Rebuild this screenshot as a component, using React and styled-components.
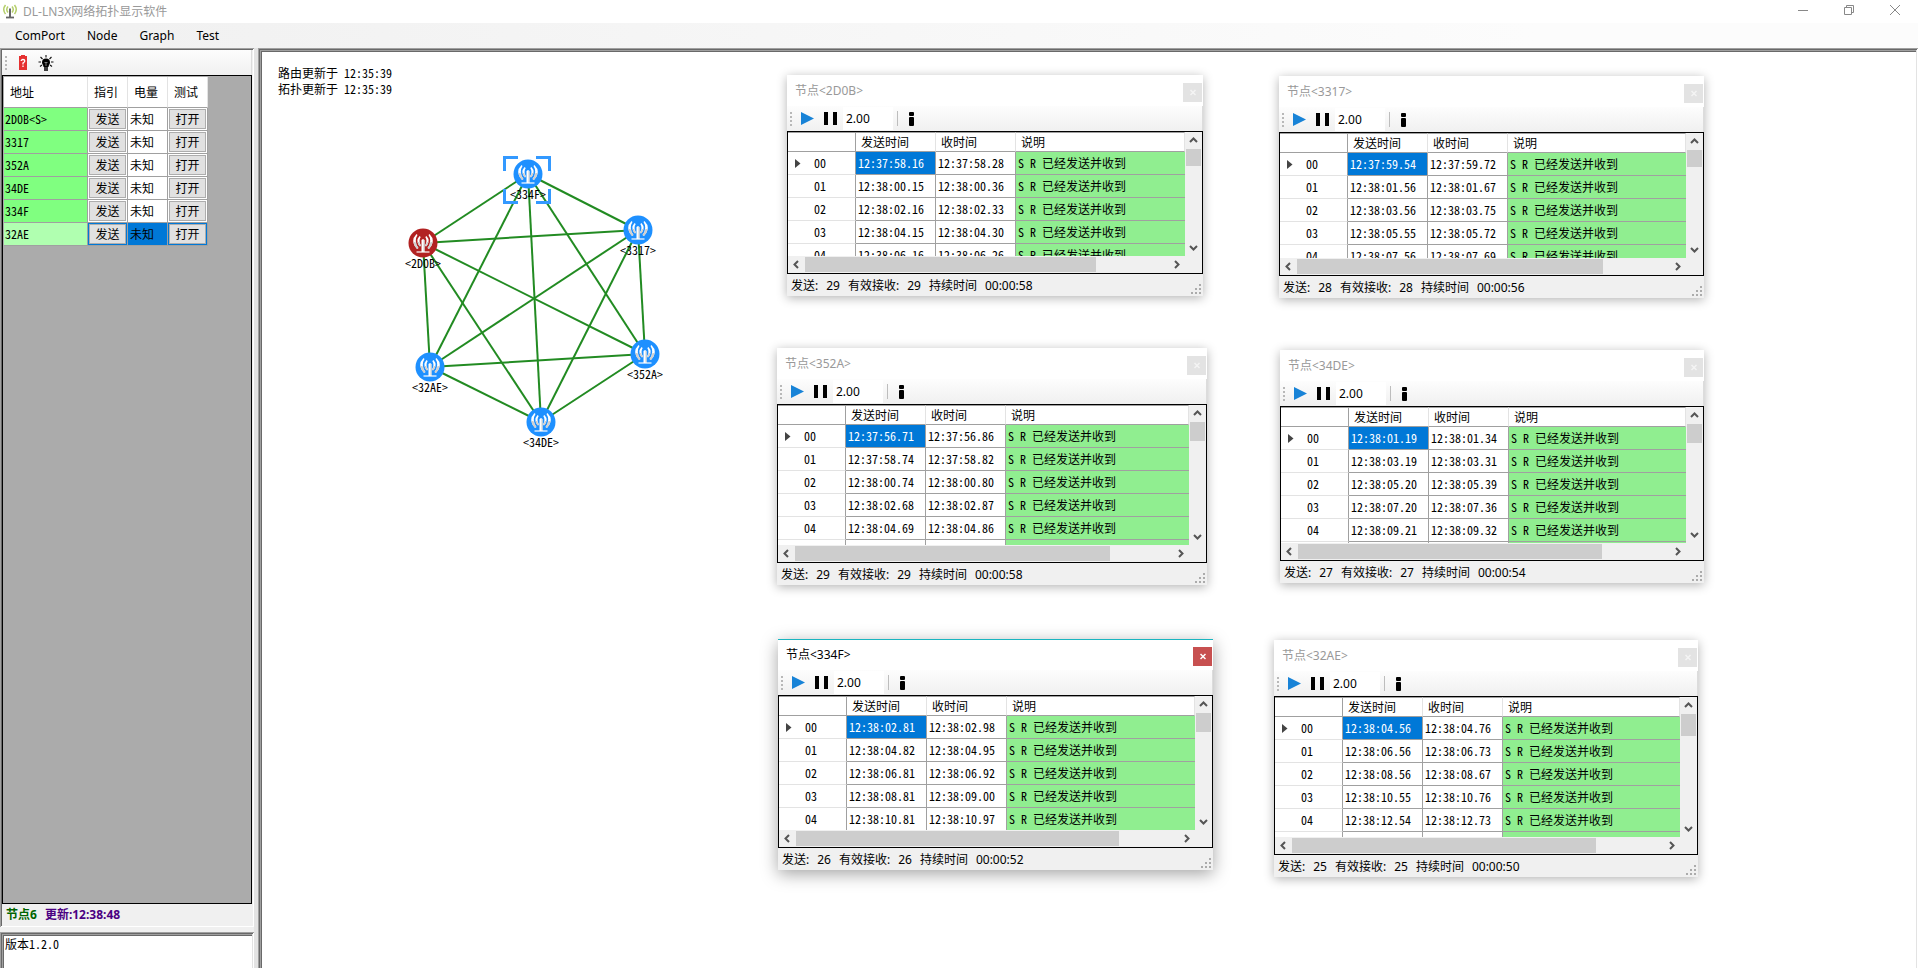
import React from "react";
import styled, { createGlobalStyle, css } from "styled-components";

const UI = `"Noto Sans", "Noto Sans CJK SC", sans-serif`;
const GRID = `"Noto Sans CJK SC", "Noto Sans", sans-serif`;

const Global = createGlobalStyle`
  *, *::before, *::after { box-sizing: border-box; }
  body { margin: 0; background: #f0f0f0; color: #000; font: 12px/16px ${UI}; }
  button, input, textarea { font: inherit; color: inherit; margin: 0; padding: 0; border: 0; border-radius: 0; background: none; }
`;

/* half-width Latin glyphs, two to a Chinese character */
const gridFont = css`
  font-family: ${GRID};
  font-feature-settings: "hwid";
`;

const sunken = css`
  box-shadow: inset 1px 1px #a0a0a0, inset -1px 0 #fff, inset 2px 2px #696969,
    inset -2px 0 #e3e3e3, inset 3px 3px #a0a0a0, inset 4px 4px #696969;
`;

const Page = styled.div`
  display: flex;
  flex-direction: column;
  height: 100vh;
  overflow: hidden;
`;

const TitleBar = styled.header`
  display: flex;
  align-items: center;
  gap: 6px;
  height: 23px;
  padding-left: 3px;
  background: #fff;
  color: #999;
  flex: none;
`;

const AppTitle = styled.h1`
  margin: 0;
  flex: 1;
  font-size: 12px;
  font-weight: 400;
`;

const CaptionButtons = styled.div`
  display: flex;
  align-self: flex-start;
`;

const CaptionButton = styled.button`
  display: flex;
  align-items: center;
  justify-content: center;
  width: 46px;
  height: 20px;
`;

const MenuBar = styled.nav`
  display: flex;
  align-items: center;
  gap: 22px;
  height: 25px;
  padding-left: 15px;
  background: linear-gradient(90deg, #f0f0f0, #fcfcfc 80%);
  flex: none;
`;

const Main = styled.div`
  display: flex;
  flex: 1;
  min-height: 0;
`;

const Side = styled.aside`
  display: flex;
  flex-direction: column;
  gap: 5px;
  width: 254px;
  flex: none;
`;

const SidePanel = styled.section`
  display: flex;
  flex-direction: column;
  flex: 1;
  min-height: 0;
  padding: 2px 2px 1px 2px;
  box-shadow: inset 1px 1px #a0a0a0, inset -1px -1px #fff, inset 2px 2px #696969;
`;

const Splitter = styled.div`
  width: 4px;
  background: #e3e3e3;
  flex: none;
`;

const ToolStrip = styled.div`
  display: flex;
  align-items: center;
  height: 25px;
  padding-left: 3px;
  background: linear-gradient(#fdfdfd, #f0f0f0);
  border-right: 1px solid #dcdcdc;
  flex: none;
`;

const ToolButton = styled.button`
  display: flex;
  align-items: center;
  justify-content: center;
  width: 23px;
  height: 21px;
`;

const GripDots = styled.span`
  width: 2px;
  height: 14px;
  margin-right: 4px;
  background: repeating-linear-gradient(#b8b8b8 0 2px, transparent 2px 4px);
`;

const NodeList = styled.div`
  flex: 1;
  padding: 1px;
  background: #ababab;
  border: 1px solid #000;
  overflow: hidden;
`;

const NodeTable = styled.table`
  ${gridFont}
  table-layout: fixed;
  border-collapse: separate;
  border-spacing: 0;
  width: 204px;
  line-height: 18px;

  th {
    height: 31px;
    padding: 0 0 0 6px;
    background: #fff;
    text-align: left;
    font-weight: 400;
    border-right: 1px solid #e3e3e3;
    border-bottom: 1px solid #a0a0a0;
  }
  td {
    height: 23px;
    padding: 0;
    background: #fff;
    border-right: 1px solid #a0a0a0;
    border-bottom: 1px solid #a0a0a0;
  }
`;

const AddressCell = styled.td`
  && {
    padding: 0 0 1px 1px;
    background: ${(p) => (p.$current ? "#b0ffb0" : "#80ff80")};
  }
`;

const ActionCell = styled.td`
  && {
    padding: 1px;
    box-shadow: ${(p) => (p.$current ? "inset 0 0 0 1px #0078d7" : "none")};
  }
`;

const PowerCell = styled.td`
  && {
    padding: 0 0 1px 2px;
    background: ${(p) => (p.$current ? "#0078d7" : "#fff")};
  }
`;

const CellButton = styled.button`
  display: block;
  width: 100%;
  height: 20px;
  line-height: 16px;
  background: #e1e1e1;
  border: 1px solid #adadad;
`;

const SideStatus = styled.footer`
  display: flex;
  align-items: center;
  gap: 8px;
  height: 22px;
  padding-left: 4px;
  font-weight: 700;
  flex: none;
`;

const Count = styled.span`
  color: #006400;
`;

const Updated = styled.span`
  color: #4b0082;
`;

const LogBox = styled.textarea`
  ${gridFont}
  ${sunken}
  height: 36px;
  padding: 4px 5px;
  line-height: 16px;
  background: #fff;
  resize: none;
  overflow: hidden;
  outline: none;
  flex: none;
`;

const Workspace = styled.main`
  ${sunken}
  position: relative;
  flex: 1;
  padding: 17px 20px;
  background: #fff;
  overflow: hidden;
`;

const UpdateNote = styled.p`
  ${gridFont}
  margin: 0;
`;

const Graph = styled.svg`
  position: absolute;
  left: 142px;
  top: 92px;
  width: 280px;
  height: 320px;
`;

const NodeLabel = styled.text`
  ${gridFont}
  font-size: 12px;
  text-anchor: middle;
`;

const Win = styled.section`
  position: absolute;
  left: ${(p) => p.$x}px;
  top: ${(p) => p.$y}px;
  width: ${(p) => p.$w}px;
  height: ${(p) => p.$h}px;
  display: flex;
  flex-direction: column;
  background: #f0f0f0;
  box-shadow: ${(p) =>
    p.$active ? "0 4px 16px rgba(0,0,0,.36)" : "0 2px 10px rgba(0,0,0,.3)"};
`;

const WinTitle = styled.header`
  display: flex;
  align-items: center;
  justify-content: space-between;
  height: 31px;
  padding: 0 1px 0 8px;
  background: #fff;
  color: ${(p) => (p.$active ? "#000" : "#999")};
  box-shadow: ${(p) => (p.$active ? "inset 0 1px #1ab5c0" : "none")};
  flex: none;
`;

const WinName = styled.h2`
  margin: 0;
  font-size: 12px;
  font-weight: 400;
`;

const CloseButton = styled.button`
  display: flex;
  align-items: center;
  justify-content: center;
  width: 19px;
  height: 19px;
  margin-top: 4px;
  background: ${(p) => (p.$active ? "#c75050" : "#e3e3e3")};
  color: ${(p) => (p.$active ? "#fff" : "#f4f4f4")};
`;

const SpeedInput = styled.input`
  width: 50px;
  height: 23px;
  padding-left: 3px;
  background: #fff;
  outline: none;
  margin-left: 1px;
`;

const Separator = styled.span`
  width: 1px;
  height: 15px;
  margin: 0 2px 0 4px;
  background: #bdbdbd;
`;

const DataGrid = styled.div`
  display: grid;
  grid-template: minmax(0, 1fr) 17px / minmax(0, 1fr) 17px;
  flex: 1;
  min-height: 0;
  border: 1px solid #000;
`;

const Viewport = styled.div`
  background: #fff;
  overflow: hidden;
`;

const LogTable = styled.table`
  ${gridFont}
  table-layout: fixed;
  border-collapse: separate;
  border-spacing: 0;
  width: 100%;
  line-height: 18px;

  thead td,
  thead th {
    height: 20px;
    padding: 0 0 0 5px;
    text-align: left;
    font-weight: 400;
    border-top: 1px solid #a0a0a0;
    border-right: 1px solid #e3e3e3;
    border-bottom: 1px solid #a0a0a0;
  }
  thead td {
    border-right-color: #a0a0a0;
  }
  tbody th {
    height: 23px;
    padding: 0 0 0 7px;
    font-weight: 400;
    border-right: 1px solid #a0a0a0;
    border-bottom: 1px solid #e3e3e3;
  }
`;

const RowHead = styled.div`
  display: flex;
  align-items: center;
  gap: 13px;
`;

const Cell = styled.td`
  height: 23px;
  padding: 0 0 1px 2px;
  white-space: nowrap;
  border-right: ${(p) => (p.$note ? 0 : "1px solid #a0a0a0")};
  border-bottom: 1px solid #a0a0a0;
  background: ${(p) => (p.$selected ? "#0078d7" : p.$note ? "#90ee90" : "#fff")};
  color: ${(p) => (p.$selected ? "#fff" : "#000")};
`;

const ScrollTrack = styled.div`
  display: flex;
  flex-direction: ${(p) => (p.$vertical ? "column" : "row")};
  background: #f0f0f0;
`;

const ScrollArrow = styled.button`
  display: flex;
  align-items: center;
  justify-content: center;
  width: 17px;
  height: 17px;
  flex: none;
`;

const ScrollThumb = styled.div`
  background: #cdcdcd;
  ${(p) =>
    p.$vertical
      ? `height: ${p.$size}px; margin: 0 1px auto 1px;`
      : `width: ${p.$size}px; margin: 1px auto 1px 0;`}
`;

const StatusBar = styled.footer`
  display: flex;
  align-items: center;
  gap: 8px;
  height: 22px;
  padding: 1px 2px 0 4px;
  flex: none;
`;

const SizeGrip = styled.svg`
  margin: 6px 0 0 auto;
`;

function Arrow({ dir, label }) {
  const turn = { up: 0, right: 90, down: 180, left: 270 }[dir];
  return (
    <ScrollArrow aria-label={label}>
      <svg width="9" height="9" viewBox="0 0 9 9">
        <path
          d="M1 6 L4.5 2.5 L8 6"
          fill="none"
          stroke="#555"
          strokeWidth="2"
          transform={`rotate(${turn} 4.5 4.5)`}
        />
      </svg>
    </ScrollArrow>
  );
}

function AppIcon() {
  return (
    <svg width="14" height="15" viewBox="0 0 14 15" fill="none">
      <g stroke="#b5cf6b" strokeWidth="1.5">
        <path d="M2.5 1 Q-1 5.5 2.5 10" />
        <path d="M11.5 1 Q15 5.5 11.5 10" />
        <path d="M5 2.5 Q2.5 5.5 5 8.5" />
        <path d="M9 2.5 Q11.5 5.5 9 8.5" />
      </g>
      <path d="M7 4.5 V13" stroke="#555" strokeWidth="1.8" />
      <path d="M3 13.5 H11" stroke="#666" strokeWidth="1.8" />
    </svg>
  );
}

function BatteryIcon() {
  return (
    <svg width="8" height="15" viewBox="0 0 8 15">
      <path d="M2 0 H6 V1 H8 V15 H0 V1 H2 Z" fill="#e53030" />
      <path
        d="M2.2 6 Q2.2 4.5 4 4.5 Q5.800 4.5 5.8 6 Q5.8 7 4 8 V9.5 M4 10.500 V12"
        fill="none"
        stroke="#fff"
        strokeWidth="1.3"
      />
    </svg>
  );
}

function BulbIcon() {
  return (
    <svg width="16" height="16" viewBox="0 0 16 16" fill="none">
      <path
        d="M8 0 V2.5 M2.5 2 L4.5 4 M13.5 2 L11.5 4 M0.5 7 H3 M13 7 H15.5 M2 11.5 L4 10 M14 11.5 L12 10"
        stroke="#111"
        strokeWidth="1.1"
      />
      <path d="M8 3.5 A4 4 0 0 1 12 7.5 C12 9.5 10.500 10 10.5 12 H5.5 C5.500 10 4 9.5 4 7.5 A4 4 0 0 1 8 3.5 Z" fill="#000" />
      <path d="M6.5 7.5 H9.5 M8 7.5 V11" stroke="#999" strokeWidth="0.8" />
      <path d="M6 13 H10 M6 15 H10" stroke="#000" strokeWidth="1.6" />
    </svg>
  );
}

const GRAPH_NODES = [
  { id: "334F", x: 128, y: 34, selected: true },
  { id: "3317", x: 238, y: 90 },
  { id: "352A", x: 245, y: 214 },
  { id: "34DE", x: 141, y: 282 },
  { id: "32AE", x: 30, y: 227 },
  { id: "2D0B", x: 23, y: 103, root: true },
];

function Waves({ flip }) {
  return (
    <g transform={flip ? "scale(-1 1)" : undefined}>
      <path d="M-6.5 -9 Q-13.5 -2 -6 6 L-4.5 5 Q-9.5 -2 -5.5 -8 Z" fill="#fff" />
      <path d="M-9.8 -1 Q-9 3 -6 6 L-4.5 5 Q-7 2 -7.5 -1 Z" fill="#d0d0d0" />
      <path d="M-3.5 -7 Q-8 -2 -3 3.5 L-2 2.5 Q-4.800 -2 -2.3 -6 Z" fill="#fff" />
      <path d="M-5.6 -1 Q-5 2 -3 3.5 L-2 2.5 Q-3.4 1 -3.7 -1 Z" fill="#d0d0d0" />
    </g>
  );
}

function AntennaNode({ x, y, root }) {
  return (
    <g transform={`translate(${x} ${y})`}>
      <circle r="14.5" fill={root ? "#b22222" : "#1e90ff"} />
      <Waves />
      <Waves flip />
      <path d="M-1.5 -3 L0 -4 L1.5 -3 V9 H-1.5 Z" fill="#fff" />
      <path d="M0.5 -3 H1.5 V9 H0.5 Z" fill="#ccc" />
      <path d="M-6.5 9 H6.5" stroke="#fff" strokeWidth="1.2" />
    </g>
  );
}

function Topology() {
  const edges = [];
  GRAPH_NODES.forEach((a, i) => GRAPH_NODES.slice(i + 1).forEach((b) => edges.push([a, b])));
  return (
    <Graph viewBox="0 0 280 320" role="img" aria-label="网络拓扑">
      <g stroke="#228b22" strokeWidth="2">
        {edges.map(([a, b]) => (
          <line key={a.id + b.id} x1={a.x} y1={a.y} x2={b.x} y2={b.y} />
        ))}
      </g>
      {GRAPH_NODES.map((n) => (
        <AntennaNode key={n.id} {...n} />
      ))}
      {GRAPH_NODES.filter((n) => n.selected).map((n) => (
        <path
          key={n.id}
          transform={`translate(${n.x - 1} ${n.y})`}
          d="M-22.5 -3 V-16.5 H-9 M9 -16.5 H22.5 V-3 M-22.5 15 V28.5 H-9 M9 28.5 H22.5 V15"
          fill="none"
          stroke="#3399ff"
          strokeWidth="3"
        />
      ))}
      {GRAPH_NODES.map((n) => (
        <NodeLabel key={n.id} x={n.x} y={n.y + 25}>
          {`<${n.id}>`}
        </NodeLabel>
      ))}
    </Graph>
  );
}

const WINDOWS = [
  {
    id: "2D0B", x: 529, y: 27, w: 416, h: 221, hThumb: 291, vThumb: 17, count: 29, time: "00:00:58",
    rows: [
      ["12:37:58.16", "12:37:58.28"],
      ["12:38:00.15", "12:38:00.36"],
      ["12:38:02.16", "12:38:02.33"],
      ["12:38:04.15", "12:38:04.30"],
      ["12:38:06.16", "12:38:06.26"],
    ],
  },
  {
    id: "3317", x: 1021, y: 28, w: 425, h: 222, hThumb: 306, vThumb: 17, count: 28, time: "00:00:56",
    rows: [
      ["12:37:59.54", "12:37:59.72"],
      ["12:38:01.56", "12:38:01.67"],
      ["12:38:03.56", "12:38:03.75"],
      ["12:38:05.55", "12:38:05.72"],
      ["12:38:07.56", "12:38:07.69"],
    ],
  },
  {
    id: "352A", x: 519, y: 300, w: 430, h: 237, hThumb: 315, vThumb: 19, count: 29, time: "00:00:58", more: true,
    rows: [
      ["12:37:56.71", "12:37:56.86"],
      ["12:37:58.74", "12:37:58.82"],
      ["12:38:00.74", "12:38:00.80"],
      ["12:38:02.68", "12:38:02.87"],
      ["12:38:04.69", "12:38:04.86"],
    ],
  },
  {
    id: "34DE", x: 1022, y: 302, w: 424, h: 233, hThumb: 304, vThumb: 19, count: 27, time: "00:00:54", more: true,
    rows: [
      ["12:38:01.19", "12:38:01.34"],
      ["12:38:03.19", "12:38:03.31"],
      ["12:38:05.20", "12:38:05.39"],
      ["12:38:07.20", "12:38:07.36"],
      ["12:38:09.21", "12:38:09.32"],
    ],
  },
  {
    id: "334F", x: 520, y: 591, w: 435, h: 231, hThumb: 323, vThumb: 19, count: 26, time: "00:00:52", active: true,
    rows: [
      ["12:38:02.81", "12:38:02.98"],
      ["12:38:04.82", "12:38:04.95"],
      ["12:38:06.81", "12:38:06.92"],
      ["12:38:08.81", "12:38:09.00"],
      ["12:38:10.81", "12:38:10.97"],
    ],
  },
  {
    id: "32AE", x: 1016, y: 592, w: 424, h: 237, hThumb: 304, vThumb: 22, count: 25, time: "00:00:50", more: true,
    rows: [
      ["12:38:04.56", "12:38:04.76"],
      ["12:38:06.56", "12:38:06.73"],
      ["12:38:08.56", "12:38:08.67"],
      ["12:38:10.55", "12:38:10.76"],
      ["12:38:12.54", "12:38:12.73"],
    ],
  },
];

function NodeWindow({ id, x, y, w, h, hThumb, vThumb, count, time, active, more, rows }) {
  return (
    <Win $x={x} $y={y} $w={w} $h={h} $active={active}>
      <WinTitle $active={active}>
        <WinName>{`节点<${id}>`}</WinName>
        <CloseButton $active={active} aria-label="关闭">
          <svg width="6" height="7" viewBox="0 0 6 7">
            <path d="M0.5 1 L5.5 6 M5.5 1 L0.5 6" stroke="currentColor" strokeWidth="1.5" />
          </svg>
        </CloseButton>
      </WinTitle>
      <ToolStrip>
        <GripDots />
        <ToolButton aria-label="开始">
          <svg width="13" height="13" viewBox="0 0 13 13">
            <path d="M0 0 L13 6.5 L0 13 Z" fill="#1883d7" />
          </svg>
        </ToolButton>
        <ToolButton aria-label="暂停">
          <svg width="13" height="13" viewBox="0 0 13 13">
            <path d="M0 0 H4 V13 H0 Z M9 0 H13 V13 H9 Z" fill="#000" />
          </svg>
        </ToolButton>
        <SpeedInput aria-label="间隔" defaultValue="2.00" />
        <Separator />
        <ToolButton aria-label="信息">
          <svg width="5" height="14" viewBox="0 0 5 14">
            <rect width="5" height="4" rx="1" />
            <rect y="5" width="5" height="9" rx="1" />
          </svg>
        </ToolButton>
      </ToolStrip>
      <DataGrid>
        <Viewport>
          <LogTable>
            <colgroup>
              <col width="68" />
              <col width="80" />
              <col width="80" />
              <col />
            </colgroup>
            <thead>
              <tr>
                <td />
                <th scope="col">发送时间</th>
                <th scope="col">收时间</th>
                <th scope="col">说明</th>
              </tr>
            </thead>
            <tbody>
              {rows.map(([sent, got], i) => (
                <tr key={sent}>
                  <th scope="row">
                    <RowHead>
                      <svg width="6" height="9" viewBox="0 0 6 9">
                        {i === 0 && <path d="M0 0 L5.5 4.5 L0 9 Z" fill="#444" />}
                      </svg>
                      {`0${i}`}
                    </RowHead>
                  </th>
                  <Cell $selected={i === 0}>{sent}</Cell>
                  <Cell>{got}</Cell>
                  <Cell $note>S R 已经发送并收到</Cell>
                </tr>
              ))}
              {more && (
                <tr>
                  <th scope="row" />
                  <Cell />
                  <Cell />
                  <Cell $note />
                </tr>
              )}
            </tbody>
          </LogTable>
        </Viewport>
        <ScrollTrack $vertical>
          <Arrow dir="up" label="向上" />
          <ScrollThumb $vertical $size={vThumb} />
          <Arrow dir="down" label="向下" />
        </ScrollTrack>
        <ScrollTrack>
          <Arrow dir="left" label="向左" />
          <ScrollThumb $size={hThumb} />
          <Arrow dir="right" label="向右" />
        </ScrollTrack>
      </DataGrid>
      <StatusBar>
        <span>发送:</span>
        <span>{count}</span>
        <span>有效接收:</span>
        <span>{count}</span>
        <span>持续时间</span>
        <span>{time}</span>
        <SizeGrip width="10" height="10" viewBox="0 0 10 10" fill="#ababab">
          <path d="M8 0h2v2h-2z M4 4h2v2h-2z M8 4h2v2h-2z M0 8h2v2h-2z M4 8h2v2h-2z M8 8h2v2h-2z" />
        </SizeGrip>
      </StatusBar>
    </Win>
  );
}

const ADDRESSES = ["2D0B<S>", "3317", "352A", "34DE", "334F", "32AE"];

export default function App() {
  return (
    <Page>
      <Global />
      <TitleBar>
        <AppIcon />
        <AppTitle>DL-LN3X网络拓扑显示软件</AppTitle>
        <CaptionButtons>
          <CaptionButton aria-label="最小化">
            <svg width="10" height="10" viewBox="0 0 10 10" stroke="#888">
              <path d="M0 5.5 H10" />
            </svg>
          </CaptionButton>
          <CaptionButton aria-label="还原">
            <svg width="10" height="10" viewBox="0 0 10 10" fill="none" stroke="#888">
              <path d="M0.5 2.5 H7.5 V9.5 H0.5 Z M2.5 2.5 V0.5 H9.5 V7.5 H7.5" />
            </svg>
          </CaptionButton>
          <CaptionButton aria-label="关闭">
            <svg width="10" height="10" viewBox="0 0 10 10" stroke="#888">
              <path d="M0 0 L10 10 M10 0 L0 10" />
            </svg>
          </CaptionButton>
        </CaptionButtons>
      </TitleBar>
      <MenuBar>
        {["ComPort", "Node", "Graph", "Test"].map((name) => (
          <button key={name}>{name}</button>
        ))}
      </MenuBar>
      <Main>
        <Side>
          <SidePanel>
            <ToolStrip>
              <GripDots />
              <ToolButton aria-label="查询电量">
                <BatteryIcon />
              </ToolButton>
              <ToolButton aria-label="指示灯">
                <BulbIcon />
              </ToolButton>
            </ToolStrip>
            <NodeList>
              <NodeTable>
                <colgroup>
                  <col width="84" />
                  <col width="40" />
                  <col width="40" />
                  <col width="40" />
                </colgroup>
                <thead>
                  <tr>
                    <th scope="col">地址</th>
                    <th scope="col">指引</th>
                    <th scope="col">电量</th>
                    <th scope="col">测试</th>
                  </tr>
                </thead>
                <tbody>
                  {ADDRESSES.map((address, i) => {
                    const current = i === ADDRESSES.length - 1;
                    return (
                      <tr key={address}>
                        <AddressCell $current={current}>{address}</AddressCell>
                        <ActionCell $current={current}>
                          <CellButton>发送</CellButton>
                        </ActionCell>
                        <PowerCell $current={current}>未知</PowerCell>
                        <ActionCell $current={current}>
                          <CellButton>打开</CellButton>
                        </ActionCell>
                      </tr>
                    );
                  })}
                </tbody>
              </NodeTable>
            </NodeList>
            <SideStatus>
              <Count>节点6</Count>
              <Updated>更新:12:38:48</Updated>
            </SideStatus>
          </SidePanel>
          <LogBox aria-label="日志" readOnly value="版本1.2.0" />
        </Side>
        <Splitter />
        <Workspace>
          <UpdateNote>路由更新于 12:35:39</UpdateNote>
          <UpdateNote>拓扑更新于 12:35:39</UpdateNote>
          <Topology />
          {WINDOWS.map((win) => (
            <NodeWindow key={win.id} {...win} />
          ))}
        </Workspace>
      </Main>
    </Page>
  );
}
